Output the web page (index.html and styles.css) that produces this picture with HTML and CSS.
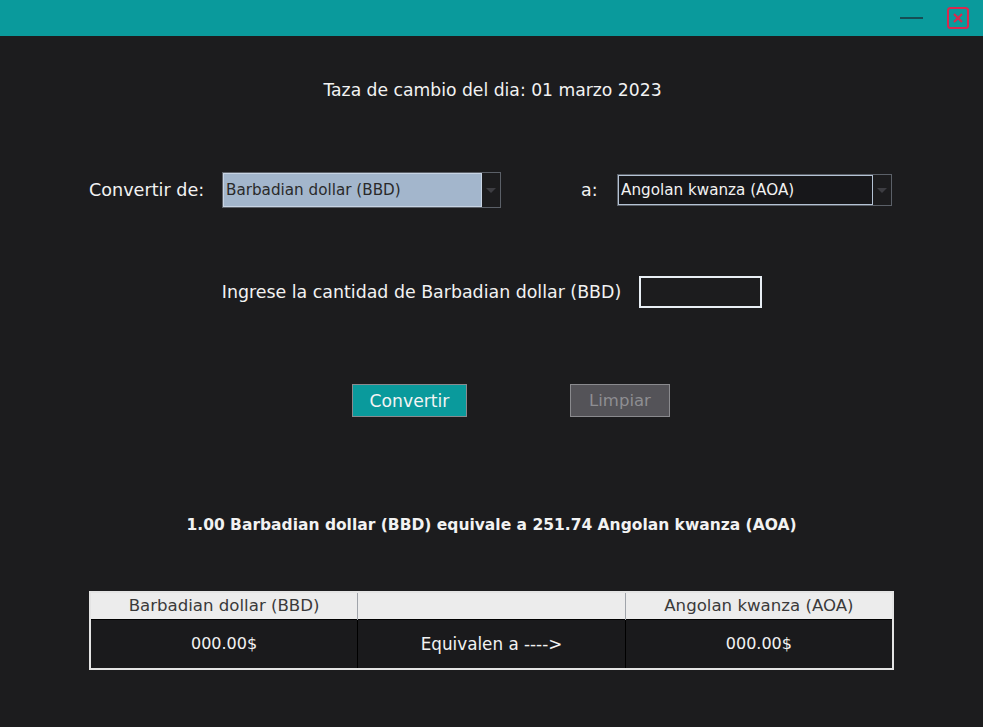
FILE: index.html
```html
<!DOCTYPE html>
<html lang="es">
<head>
<meta charset="utf-8">
<title>Conversor</title>
<link rel="stylesheet" href="styles.css">
</head>
<body>
<div class="titlebar">
  <span class="minimize"></span>
  <span class="close">
    <svg width="22" height="22" viewBox="0 0 22 22"><rect x="1" y="1" width="20" height="20" rx="2.5" fill="none" stroke="#d8294f" stroke-width="2"/><path d="M7 7 L15 15 M15 7 L7 15" stroke="#d8294f" stroke-width="2.2" fill="none"/></svg>
  </span>
</div>
<div class="main">
  <div class="date">Taza de cambio del dia: 01 marzo 2023</div>
  <div class="convert-row">
    <span class="label from-label">Convertir de:</span>
    <div class="combo combo-from">
      <span class="combo-text">Barbadian dollar (BBD)</span>
      <span class="combo-arrow"><i></i></span>
    </div>
    <span class="label to-label">a:</span>
    <div class="combo combo-to">
      <span class="combo-text">Angolan kwanza (AOA)</span>
      <span class="combo-arrow"><i></i></span>
    </div>
  </div>
  <div class="amount-row">
    <span class="label">Ingrese la cantidad de Barbadian dollar (BBD)</span>
    <span class="amount-input"></span>
  </div>
  <div class="buttons">
    <button class="btn btn-convert">Convertir</button>
    <button class="btn btn-clear">Limpiar</button>
  </div>
  <div class="result">1.00 Barbadian dollar (BBD) equivale a 251.74 Angolan kwanza (AOA)</div>
  <table class="table">
    <thead>
      <tr><th>Barbadian dollar (BBD)</th><th></th><th>Angolan kwanza (AOA)</th></tr>
    </thead>
    <tbody>
      <tr><td>000.00$</td><td class="mid">Equivalen a ----&gt;</td><td>000.00$</td></tr>
    </tbody>
  </table>
</div>
</body>
</html>
```
FILE: styles.css
```css
* { box-sizing: border-box; }
html, body { margin: 0; padding: 0; }
body {
  background: #1c1c1e;
  color: #f2f2f2;
  font-family: "DejaVu Sans", sans-serif;
  font-size: 17px;
  width: 983px;
  height: 727px;
  overflow: hidden;
}
.titlebar {
  height: 36px;
  background: #0a9a9c;
  display: flex;
  justify-content: flex-end;
  align-items: center;
  padding-right: 14px;
}
.minimize {
  width: 23px;
  height: 2px;
  background: #164e55;
  margin-right: 24px;
}
.close { display: flex; width: 22px; height: 22px; }
.main { display: flex; flex-direction: column; }
.date {
  margin-top: 44px;
  text-align: center;
  line-height: 20px;
  font-size: 17.2px;
  padding-left: 2px;
}
.convert-row {
  margin-top: 72px;
  display: flex;
  align-items: center;
  padding-left: 89px;
  height: 36px;
}
.label { font-size: 17.4px; line-height: 20px; }
.from-label { width: 133px; font-size: 17.6px; }
.to-label { margin-left: 80px; width: 36px; }
.combo {
  display: flex;
  height: 36px;
  border: 1px solid #5b6068;
  background: #1c1c1e;
}
.combo-from { width: 279px; }
.combo-to { width: 275px; height: 32px; }
.combo-text {
  flex: 1;
  display: flex;
  align-items: center;
  padding-left: 2px;
  font-size: 15.2px;
  border: 1px solid #c8d4e4;
}
.combo-from .combo-text { background: #a3b6cc; color: #2a2a2a; }
.combo-to .combo-text { background: #17171a; color: #f2f2f2; border-color: #b4c2d4; }
.combo-arrow {
  width: 18px;
  display: flex;
  align-items: center;
  justify-content: center;
  background: #1c1c1e;
}
.combo-arrow i {
  width: 0; height: 0;
  border-left: 5px solid transparent;
  border-right: 5px solid transparent;
  border-top: 5px solid #3d3d42;
}
.amount-row {
  margin-top: 68px;
  display: flex;
  justify-content: center;
  align-items: center;
  gap: 18px;
  height: 32px;
  padding-left: 1px;
}
.amount-input {
  width: 123px;
  height: 32px;
  border: 2px solid #e8eef4;
  background: #1c1c1e;
}
.buttons {
  margin-top: 76px;
  display: flex;
  padding-left: 352px;
  gap: 103px;
  height: 33px;
}
.btn {
  font-family: inherit;
  font-size: 17.2px;
  height: 33px;
  border: 1px solid #8a8a8e;
  padding: 0;
}
.btn-convert { width: 115px; background: #0a9a9c; color: #f4f4f4; }
.btn-clear { width: 100px; background: #545358; color: #8e8e92; font-size: 16.5px; }
.result {
  margin-top: 98px;
  text-align: center;
  font-weight: bold;
  font-size: 15.5px;
  line-height: 20px;
}
.table {
  margin: 56px 0 0 89px;
  width: 805px;
  border-collapse: collapse;
  border: 2px solid #e4e4e4;
  table-layout: fixed;
}
.table th {
  background: #ececec;
  color: #3a3a3a;
  font-weight: normal;
  font-size: 16.6px;
  height: 27px;
  border-right: 1px solid #a0a4aa;
  padding: 0;
}
.table td {
  background: #1a1a1c;
  color: #f2f2f2;
  text-align: center;
  height: 50px;
  border-right: 1px solid #000;
  border-top: 1px solid #000;
  font-size: 16px;
  padding: 0;
}
.table td.mid { font-size: 16.8px; }
```
